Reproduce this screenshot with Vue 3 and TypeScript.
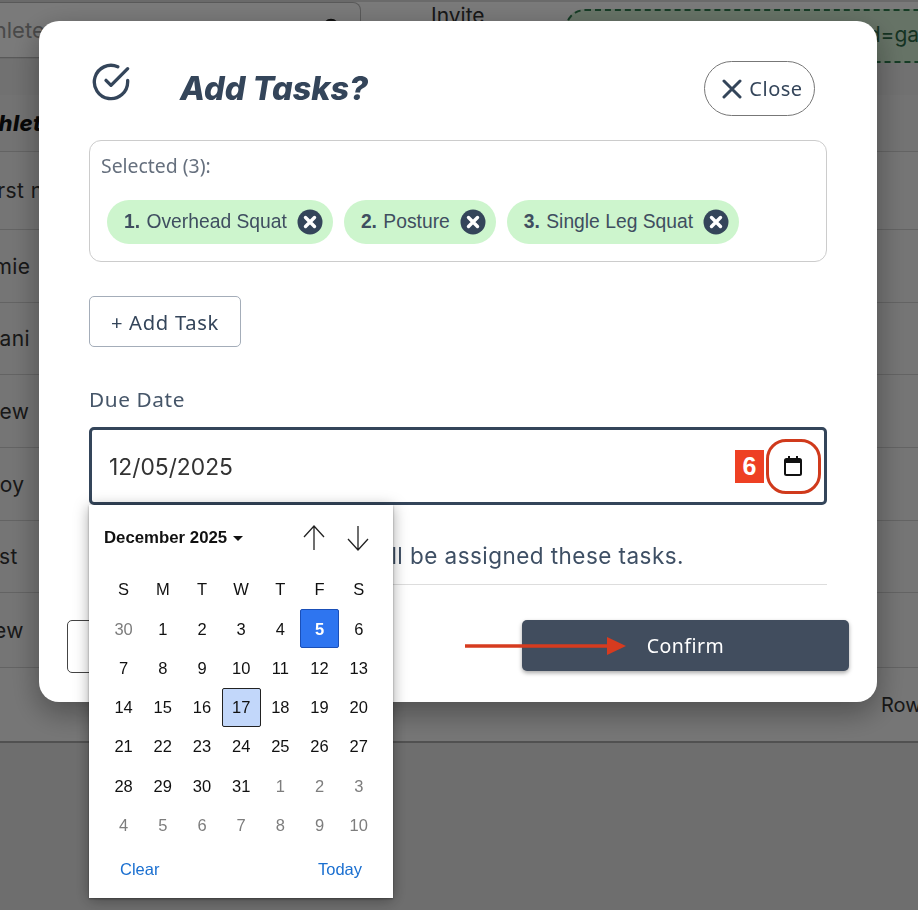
<template>
  <div class="page">
    <div class="toolbar">
      <div class="search">
        <span class="search-text">Search athlete</span>
        <svg viewBox="0 0 20 20" fill="none" stroke="#222" stroke-width="2.4">
          <circle cx="9" cy="9" r="7" />
          <path d="M14 14l5 5" />
        </svg>
      </div>
      <span class="invite">Invite</span>
      <div class="link-box">id=gameplan</div>
    </div>
    <div class="band"></div>
    <div class="row head"><span class="cell">Athlete</span></div>
    <div v-for="r in rows" :key="r.text" class="row" :style="{ height: r.height + 'px' }">
      <span class="cell" :style="{ marginLeft: r.shift + 'px' }">{{ r.text }}</span>
    </div>
    <div class="pager"><span>Rows per page</span></div>
  </div>

  <div class="backdrop"></div>

  <div class="modal">
    <div class="modal-head">
      <svg class="check" viewBox="0 0 24 24" fill="none" stroke="#34455a" stroke-width="2" stroke-linecap="round" stroke-linejoin="round">
        <path d="M22 11.08V12a10 10 0 1 1-5.93-9.14" />
        <polyline points="22 4 12 14.01 9 11.01" />
      </svg>
      <h2>Add Tasks?</h2>
      <button class="close">
        <svg viewBox="0 0 20 20" fill="none" stroke="#34455a" stroke-width="3" stroke-linecap="round">
          <path d="M2 2l16 16M18 2L2 18" />
        </svg>
        Close
      </button>
    </div>

    <div class="selected">
      <div class="selected-label">Selected (3):</div>
      <div class="chips">
        <div v-for="(t, i) in tasks" :key="t" class="chip">
          <span><b>{{ i + 1 }}.</b> {{ t }}</span>
          <svg viewBox="0 0 26 26">
            <circle cx="13" cy="13" r="12.5" fill="#34455a" />
            <path d="M8.5 8.5l9 9M17.5 8.5l-9 9" stroke="#fff" stroke-width="3.4" stroke-linecap="round" />
          </svg>
        </div>
      </div>
    </div>

    <button class="add-task">+ Add Task</button>

    <label class="due-label">Due Date</label>
    <div class="date-input">
      <span>12/05/2025</span>
      <svg class="cal" viewBox="0 0 18 20" fill="#111" stroke="#111" stroke-width="2">
        <rect x="1" y="3" width="16" height="16" rx="1.5" fill="none" />
        <path d="M1 5h16" stroke-width="4" />
        <path d="M5 0v3M13 0v3" />
      </svg>
    </div>

    <p class="note">The selected athletes will be assigned these tasks.</p>
    <div class="divider"></div>

    <div class="footer">
      <button class="cancel">Cancel</button>
      <button class="confirm">Confirm</button>
    </div>

    <!-- annotations from the screenshot -->
    <div class="badge">6</div>
    <div class="ring"></div>
    <svg class="arrow" viewBox="0 0 162 20">
      <path d="M0 10h145" stroke="#d63b1f" stroke-width="3.4" />
      <path d="M142 1l19 9-19 9z" fill="#d63b1f" />
    </svg>

    <div class="picker">
      <div class="picker-head">
        <span class="month">December 2025</span>
        <span class="caret"></span>
        <svg class="nav up" viewBox="0 0 24 26" fill="none" stroke="#222" stroke-width="1.3">
          <path d="M12 25V1M2 12L12 1l10 11" />
        </svg>
        <svg class="nav" viewBox="0 0 24 26" fill="none" stroke="#222" stroke-width="1.3">
          <path d="M12 1v24M2 14l10 11 10-11" />
        </svg>
      </div>
      <div class="grid">
        <span v-for="(d, i) in weekdays" :key="i" class="wd">{{ d }}</span>
        <span
          v-for="c in cells"
          :key="c.key"
          class="day"
          :class="{ muted: c.muted, picked: c.picked, today: c.today }"
        >{{ c.day }}</span>
      </div>
      <div class="picker-foot">
        <span>Clear</span>
        <span>Today</span>
      </div>
    </div>
  </div>
</template>

<script setup lang="ts">
const tasks = ['Overhead Squat', 'Posture', 'Single Leg Squat']
const weekdays = ['S', 'M', 'T', 'W', 'T', 'F', 'S']

const rows = [
  { text: 'First name', shift: -21, height: 78 },
  { text: 'Jamie', shift: -31, height: 73 },
  { text: 'Dani', shift: -16, height: 72 },
  { text: 'Drew', shift: -24, height: 73 },
  { text: 'Troy', shift: -21, height: 73 },
  { text: 'Test', shift: -26, height: 72 },
  { text: 'Andrew', shift: -55, height: 75 },
]

interface Cell {
  key: string
  day: number
  muted: boolean
  picked: boolean
  today: boolean
}

const cells: Cell[] = []
const push = (day: number, muted: boolean) => {
  cells.push({
    key: `${cells.length}`,
    day,
    muted,
    picked: !muted && day === 5,
    today: !muted && day === 17,
  })
}
push(30, true)
for (let d = 1; d <= 31; d++) push(d, false)
for (let d = 1; d <= 10; d++) push(d, true)
</script>

<style>
html,
body {
  margin: 0;
  background: #fff;
  overflow: hidden;
}
</style>

<style scoped>
.page {
  width: 918px;
  height: 910px;
  font-family: Inter, 'Liberation Sans', sans-serif;
  color: #333;
  overflow: hidden;
  background: #e6e6e6;
}

.toolbar {
  height: 58px;
  display: flex;
  align-items: flex-start;
  background: #fff;
  border-top: 2px solid #ddd;
  box-sizing: border-box;
}

.search {
  position: relative;
  flex-shrink: 0;
  width: 361px;
  height: 56px;
  box-sizing: border-box;
  border: 1px solid #bbb;
  border-left: 0;
  border-top-right-radius: 8px;
  font-size: 22px;
  white-space: nowrap;
  overflow: hidden;
  padding-top: 14px;
  color: #999;
}

.search svg {
  position: absolute;
  left: 322px;
  top: 15px;
  width: 20px;
  height: 20px;
}

.search-text {
  margin-left: -105px;
}

.invite {
  flex-shrink: 0;
  margin: 1px 0 0 70px;
  font-size: 21px;
}

.link-box {
  flex-shrink: 0;
  margin: 7px 0 0 80px;
  width: 400px;
  height: 54px;
  box-sizing: border-box;
  border: 2px dashed #2f7d4f;
  border-radius: 20px;
  background: #d6f0d6;
  padding: 11px 0 0 296px;
  font-size: 21px;
  white-space: nowrap;
  overflow: hidden;
  color: #2f6b49;
}

.band {
  height: 37px;
  background: #ececec;
  border-top: 1px solid #ddd;
  box-sizing: border-box;
}

.row {
  height: 73px;
  box-sizing: border-box;
  border-bottom: 1px solid #d0d0d0;
  display: flex;
  align-items: center;
  font-size: 21px;
  letter-spacing: 0.4px;
  white-space: nowrap;
  background: #f4f4f4;
}

.row.head {
  height: 57px;
  font-size: 22px;
  font-weight: 800;
  font-style: italic;
  color: #111;
  background: #f0f0f0;
}

.row.head .cell {
  margin-left: -27px;
}

.pager {
  height: 75px;
  border-bottom: 2px solid #aaa;
  box-sizing: border-box;
  display: flex;
  align-items: center;
  padding-left: 881px;
  font-size: 20px;
  white-space: nowrap;
  background: #f6f6f6;
}

.backdrop {
  position: fixed;
  inset: 0;
  background: rgba(0, 0, 0, 0.52);
}

.modal {
  position: fixed;
  left: 39px;
  top: 21px;
  width: 838px;
  height: 681px;
  box-sizing: border-box;
  padding: 40px 50px 0;
  background: #fff;
  border-radius: 20px;
  box-shadow: 0 10px 30px rgba(0, 0, 0, 0.35);
  font-family: Inter, 'Liberation Sans', sans-serif;
  color: #34455a;
}

.modal-head {
  display: flex;
  align-items: center;
  height: 55px;
  margin-bottom: 24px;
}

.check {
  width: 40px;
  height: 40px;
  margin: -13px 0 0 2px;
  flex-shrink: 0;
}

h2 {
  margin: 0 0 0 49px;
  font-family: Inter, sans-serif;
  font-size: 32.5px;
  font-weight: 800;
  font-style: italic;
  flex: 1;
}

.close {
  width: 111px;
  height: 55px;
  margin-right: 12px;
  box-sizing: border-box;
  border: 1px solid #777;
  border-radius: 28px;
  background: #fff;
  display: flex;
  align-items: center;
  justify-content: center;
  gap: 7px;
  font-family: 'Noto Sans', sans-serif;
  font-size: 20px;
  letter-spacing: 0.5px;
  color: #34455a;
  padding: 0 0 0 6px;
}

.close svg {
  width: 20px;
  height: 20px;
}

.selected {
  height: 122px;
  box-sizing: border-box;
  border: 1px solid #ccc;
  border-radius: 12px;
  padding: 13px 11px;
}

.selected-label {
  font-family: 'Noto Sans', sans-serif;
  font-size: 19.4px;
  line-height: 24px;
  color: #66707e;
}

.chips {
  display: flex;
  gap: 11px;
  margin: 22px 0 0 6px;
}

.chip {
  height: 44px;
  display: flex;
  align-items: center;
  gap: 10px;
  padding: 0 10px 0 17px;
  border-radius: 22px;
  background: #cdf5cd;
  font-family: 'Liberation Sans', sans-serif;
  font-size: 19.3px;
  white-space: nowrap;
  color: #3f4e60;
}

.chip b {
  margin-right: 1px;
}

.chip svg {
  width: 26px;
  height: 26px;
}

.add-task {
  display: block;
  width: 152px;
  height: 51px;
  margin-top: 34px;
  box-sizing: border-box;
  border: 1px solid #a4adb9;
  border-radius: 5px;
  background: #fff;
  font-family: 'Noto Sans', sans-serif;
  font-size: 20.2px;
  letter-spacing: 0.7px;
  color: #34455a;
  padding: 0;
}

.due-label {
  display: block;
  margin-top: 38px;
  font-family: 'Noto Sans', sans-serif;
  font-size: 20.8px;
  line-height: 28px;
  letter-spacing: 0.6px;
  color: #465669;
}

.date-input {
  height: 78px;
  margin-top: 14px;
  box-sizing: border-box;
  border: 3px solid #34455a;
  border-radius: 5px;
  display: flex;
  align-items: center;
  justify-content: space-between;
  padding: 0 22px 0 17px;
  font-size: 22.8px;
  color: #333;
}

.cal {
  width: 18px;
  height: 20px;
}

.note {
  margin: 36px 0 0;
  padding-right: 143px;
  text-align: right;
  font-size: 22.5px;
  letter-spacing: 0.45px;
  line-height: 30px;
  white-space: nowrap;
  color: #3e4f64;
}

.divider {
  height: 1px;
  margin-top: 13px;
  background: #ddd;
}

.footer {
  display: flex;
  justify-content: space-between;
  margin: 35px -22px 0 -22px;
}

.cancel {
  width: 200px;
  height: 53px;
  box-sizing: border-box;
  border: 1px solid #444;
  border-radius: 5px;
  background: #fff;
  color: #34455a;
  font-size: 19px;
}

.confirm {
  width: 327px;
  height: 51px;
  border: 0;
  border-radius: 5px;
  background: #414d5e;
  box-shadow: 0 2px 4px rgba(0, 0, 0, 0.35);
  color: #fff;
  font-family: 'Noto Sans', sans-serif;
  font-size: 19.5px;
  letter-spacing: 0.5px;
}

.badge {
  position: absolute;
  left: 696px;
  top: 429px;
  width: 29px;
  height: 33px;
  background: #ee4023;
  color: #fff;
  font-family: 'Liberation Sans', sans-serif;
  font-weight: 700;
  font-size: 25px;
  line-height: 33px;
  text-align: center;
}

.ring {
  position: absolute;
  left: 727px;
  top: 418px;
  width: 55px;
  height: 55px;
  box-sizing: border-box;
  border: 3.5px solid #d03a1c;
  border-radius: 20px;
}

.arrow {
  position: absolute;
  left: 426px;
  top: 615px;
  width: 162px;
  height: 20px;
}

.picker {
  position: absolute;
  left: 50px;
  top: 484px;
  width: 304px;
  height: 393px;
  box-sizing: border-box;
  background: #fff;
  box-shadow: 0 1px 2px rgba(0, 0, 0, 0.35), 0 2px 14px rgba(0, 0, 0, 0.35);
  padding: 0 15px;
  font-family: 'Liberation Sans', sans-serif;
  color: #111;
}

.picker-head {
  height: 65px;
  display: flex;
  align-items: center;
  font-size: 16.8px;
  font-weight: 700;
}

.caret {
  margin: 1px 0 0 6px;
  border-left: 5px solid transparent;
  border-right: 5px solid transparent;
  border-top: 5px solid #111;
}

.nav {
  width: 24px;
  height: 26px;
  margin: 0 8px 0 20px;
  flex-shrink: 0;
}

.nav.up {
  margin: 0 0 0 auto;
}

.grid {
  display: grid;
  grid-template-columns: repeat(7, 39.2px);
  grid-auto-rows: 39.2px;
}

.wd,
.day {
  display: flex;
  align-items: center;
  justify-content: center;
  font-size: 16.5px;
  box-sizing: border-box;
}

.day {
  padding-top: 1px;
}

.muted {
  color: #7d7d7d;
}

.picked {
  background: #2e75f0;
  border: 1px solid #1a4fb8;
  border-radius: 2px;
  color: #fff;
  font-weight: 700;
}

.today {
  background: #c2d7fa;
  border: 1.5px solid #222;
  border-radius: 2px;
}

.picker-foot {
  display: flex;
  justify-content: space-between;
  padding: 16px 16px 0;
  font-size: 16.5px;
  color: #1a6fd0;
}
</style>
